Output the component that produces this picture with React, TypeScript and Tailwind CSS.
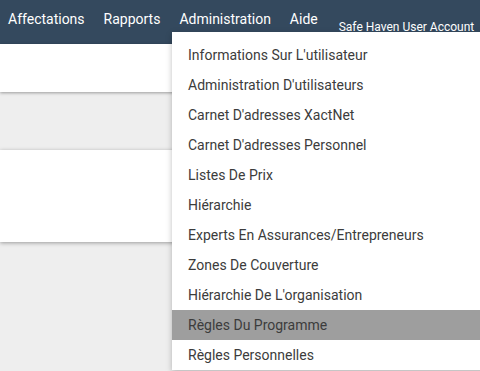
import React from "react";

const menuItems = [
  "Informations Sur L'utilisateur",
  "Administration D'utilisateurs",
  "Carnet D'adresses XactNet",
  "Carnet D'adresses Personnel",
  "Listes De Prix",
  "Hiérarchie",
  "Experts En Assurances/Entrepreneurs",
  "Zones De Couverture",
  "Hiérarchie De L'organisation",
  "Règles Du Programme",
  "Règles Personnelles",
];

const navItems = ["Affectations", "Rapports", "Administration", "Aide"];

const App: React.FC = () => {
  const active = "Règles Du Programme";

  return (
    <div
      className="relative w-[480px] h-[371px] overflow-hidden bg-[#eeeeee]"
      style={{ fontFamily: "Roboto, 'Liberation Sans', sans-serif" }}
    >
      {/* Top bar */}
      <div className="h-[44px] bg-[#34495e] flex items-start pl-[8px] text-white whitespace-nowrap">
        {navItems.map((item) => (
          <div key={item} className="shrink-0 mr-[19px] pt-[10px] text-[14px] leading-[18px]">
            {item}
          </div>
        ))}
        <div className="shrink-0 ml-[2px] pt-[19px] text-[12px] leading-[16px]">
          Safe Haven User Account
        </div>
      </div>

      {/* Page panels */}
      <div className="h-[48px] bg-white shadow-[0_1px_3px_rgba(0,0,0,0.35)] relative" />
      <div className="h-[58px]" />
      <div className="h-[92px] bg-white shadow-[0_1px_4px_rgba(0,0,0,0.35)]" />

      {/* Dropdown menu */}
      <div className="absolute left-[172px] top-[32px] w-[320px] bg-white pt-[8px] shadow-[0_2px_6px_rgba(0,0,0,0.25)]">
        {menuItems.map((item) => (
          <div
            key={item}
            className={`h-[30px] flex items-center pl-[16px] text-[14px] text-[#3c3c3c] whitespace-nowrap ${
              item === active ? "bg-[#9e9e9e]" : ""
            }`}
          >
            {item}
          </div>
        ))}
      </div>
    </div>
  );
};

export default App;
